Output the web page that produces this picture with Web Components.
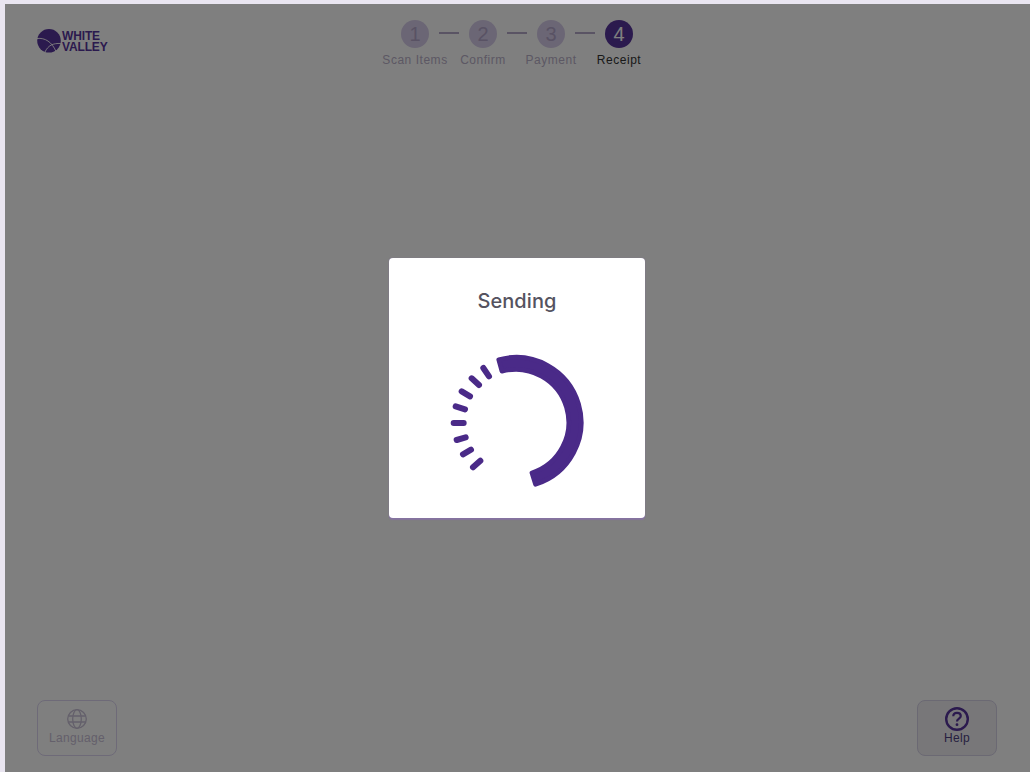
<!DOCTYPE html>
<html>
<head>
<meta charset="utf-8">
<title>Sending</title>
<style>
    html, body { margin: 0; height: 100%; }
    body { background: #e9e5f0; font-family: "Liberation Sans", sans-serif; }
</style>
</head>
<body>
<kiosk-page>
    <wv-logo slot="logo"></wv-logo>
    <wv-stepper slot="steps" active="4"></wv-stepper>
    <wv-foot-button slot="left" icon="globe" disabled>Language</wv-foot-button>
    <wv-foot-button slot="right" icon="help">Help</wv-foot-button>
    <wv-modal slot="modal" title="Sending"><wv-spinner></wv-spinner></wv-modal>
</kiosk-page>

<script>
class KioskPage extends HTMLElement {
    constructor() {
        super()
        this.attachShadow({ mode: 'open' })
        this.shadowRoot.innerHTML = `
            <style>
                :host {
                    display: block;
                    box-sizing: border-box;
                    height: 772px;
                    padding: 4px 0 0 5px;
                }
                #stage {
                    position: relative;
                    display: flex;
                    flex-direction: column;
                    justify-content: space-between;
                    box-sizing: border-box;
                    height: 100%;
                    background: #fff;
                }
                header {
                    display: grid;
                    grid-template-columns: 1fr auto 1fr;
                    padding: 16px 33px 0 32px;
                }
                footer {
                    display: flex;
                    justify-content: space-between;
                    padding: 0 33px 16px 32px;
                }
                #overlay {
                    position: absolute;
                    inset: 0;
                    display: flex;
                    align-items: center;
                    justify-content: center;
                    padding-right: 1px;
                    background: rgba(0, 0, 0, .5);
                }
            </style>
            <div id="stage">
                <header>
                    <div><slot name="logo"></slot></div>
                    <slot name="steps"></slot>
                </header>
                <footer>
                    <slot name="left"></slot>
                    <slot name="right"></slot>
                </footer>
                <div id="overlay"><slot name="modal"></slot></div>
            </div>
        `
    }
}

class WvLogo extends HTMLElement {
    constructor() {
        super()
        this.attachShadow({ mode: 'open' })
        this.shadowRoot.innerHTML = `
            <style>
                :host {
                    display: inline-flex;
                    align-items: center;
                    gap: 1px;
                    margin-top: 9px;
                    color: #57349c;
                }
                svg { display: block; width: 24px; height: 24px; }
                span {
                    padding-top: 1px;
                    font: 700 12px/11px "Liberation Sans", sans-serif;
                    letter-spacing: -.15px;
                }
            </style>
            <svg viewBox="0 0 24 24">
                <circle cx="12" cy="11.800" r="11.800" fill="currentColor"/>
                <path d="M0 9.500C8 8.500 15 13 19 22.500M8 23C11 16.500 16 14 23.800 14.500" fill="none" stroke="#fff" stroke-width=".9"/>
            </svg>
            <span>WHITE<br>VALLEY</span>
        `
    }
}

class WvStepper extends HTMLElement {
    constructor() {
        super()
        this.attachShadow({ mode: 'open' })
    }

    connectedCallback() {
        const labels = ['Scan Items', 'Confirm', 'Payment', 'Receipt']
        const active = Number(this.getAttribute('active'))
        const steps = labels.map((label, i) => {
            const on = i + 1 === active ? 'on' : ''
            const line = i < labels.length - 1 ? '<i></i>' : ''
            return `<div class="step ${on}"><b>${i + 1}</b><span>${label}</span></div>${line}`
        })
        this.shadowRoot.innerHTML = `
            <style>
                :host { display: flex; align-items: flex-start; }
                .step {
                    display: flex;
                    flex-direction: column;
                    align-items: center;
                    width: 28px;
                }
                b {
                    width: 28px;
                    height: 28px;
                    border-radius: 50%;
                    background: #d7cdea;
                    color: #b2a5c9;
                    font: 400 20px/28px "Liberation Sans", sans-serif;
                    text-align: center;
                }
                span {
                    margin-top: 4px;
                    color: #b9b0c8;
                    font: 400 12px/16px "Liberation Sans", sans-serif;
                    letter-spacing: .53px;
                    white-space: nowrap;
                }
                i {
                    width: 20px;
                    height: 2px;
                    margin: 12px 10px 0;
                    background: #b4a8c8;
                }
                .on b { background: #57349c; color: #fff; }
                .on span { color: #333; }
            </style>
            ${steps.join('')}
        `
    }
}

class WvFootButton extends HTMLElement {
    constructor() {
        super()
        this.attachShadow({ mode: 'open' })
    }

    connectedCallback() {
        const icons = {
            globe: `<svg viewBox="0 0 22 22" width="22" height="22" fill="none" stroke="currentColor" stroke-width="1.300">
                <circle cx="11" cy="11" r="9.300"/>
                <ellipse cx="11" cy="11" rx="4.300" ry="9.300"/>
                <path d="M2.300 8H19.700M2.300 14H19.700"/>
            </svg>`,
            help: `<svg viewBox="0 0 26 26" width="26" height="26" fill="none" stroke="#57349c" stroke-width="2.400">
                <circle cx="13" cy="13" r="10.800"/>
                <path d="M9.300 10.300C9.300 8 11 6.900 13 6.900C15.200 6.900 16.800 8.200 16.800 10.100C16.800 12.700 13 12.800 13 15.600" stroke-width="2.200"/>
                <circle cx="13" cy="18.700" r="1.400" fill="#57349c" stroke="none"/>
            </svg>`
        }
        const off = this.hasAttribute('disabled')
        this.shadowRoot.innerHTML = `
            <style>
                :host {
                    display: flex;
                    flex-direction: column;
                    align-items: center;
                    box-sizing: border-box;
                    width: 80px;
                    height: 56px;
                    padding-top: ${off ? 7 : 5}px;
                    border: 1px solid ${off ? '#dcd5f0' : '#d6d2e6'};
                    border-radius: 8px;
                    background: ${off ? 'transparent' : '#f0eef3'};
                    color: ${off ? '#c8c0d6' : '#4e3f80'};
                    font: 400 12px/14px "Liberation Sans", sans-serif;
                    letter-spacing: .3px;
                }
                svg { display: block; }
                div { margin-top: ${off ? 1 : -1}px; }
            </style>
            ${icons[this.getAttribute('icon')]}
            <div><slot></slot></div>
        `
    }
}

class WvModal extends HTMLElement {
    constructor() {
        super()
        this.attachShadow({ mode: 'open' })
    }

    connectedCallback() {
        this.shadowRoot.innerHTML = `
            <style>
                :host {
                    display: flex;
                    flex-direction: column;
                    align-items: center;
                    box-sizing: border-box;
                    width: 256px;
                    height: 260px;
                    padding-top: 31px;
                    border-radius: 4px;
                    background: #fff;
                    box-shadow: 0 2px 1px rgba(140, 105, 190, .5), 0 0 1px rgba(140, 105, 190, .6);
                }
                h2 {
                    margin: 0 0 34px;
                    color: #55535f;
                    font: 500 20px/24px Inter, sans-serif;
                    letter-spacing: .1px;
                }
            </style>
            <h2>${this.getAttribute('title')}</h2>
            <slot></slot>
        `
    }
}

class WvSpinner extends HTMLElement {
    constructor() {
        super()
        this.attachShadow({ mode: 'open' })
        const ticks = [
            [160, 84, 177, 109], [125, 115, 147, 135], [95, 154, 120, 169], [77, 199, 105, 208],
            [71, 249, 101, 249], [80, 300, 107, 292], [99, 343, 123, 329], [129, 382, 151, 362]
        ]
        const lines = ticks.map(([x1, y1, x2, y2]) => `<line x1="${x1}" y1="${y1}" x2="${x2}" y2="${y2}"/>`)
        this.shadowRoot.innerHTML = `
            <style>
                :host { display: block; width: 170px; height: 160px; margin: -7px 4px 0 0; }
                svg { display: block; }
            </style>
            <svg viewBox="0 0 510 480" width="170" height="160">
                <g stroke="#4a2a88" stroke-width="18" stroke-linecap="round">${lines.join('')}</g>
                <path d="M206.200 59A195 195 0 0 1 316.600 433L305.800 398.600A159 159 0 0 0 215.800 93.700Z" fill="#4a2a88" stroke="#4a2a88" stroke-width="14" stroke-linejoin="round"/>
            </svg>
        `
    }
}

customElements.define('kiosk-page', KioskPage)
customElements.define('wv-logo', WvLogo)
customElements.define('wv-stepper', WvStepper)
customElements.define('wv-foot-button', WvFootButton)
customElements.define('wv-modal', WvModal)
customElements.define('wv-spinner', WvSpinner)
</script>
</body>
</html>
